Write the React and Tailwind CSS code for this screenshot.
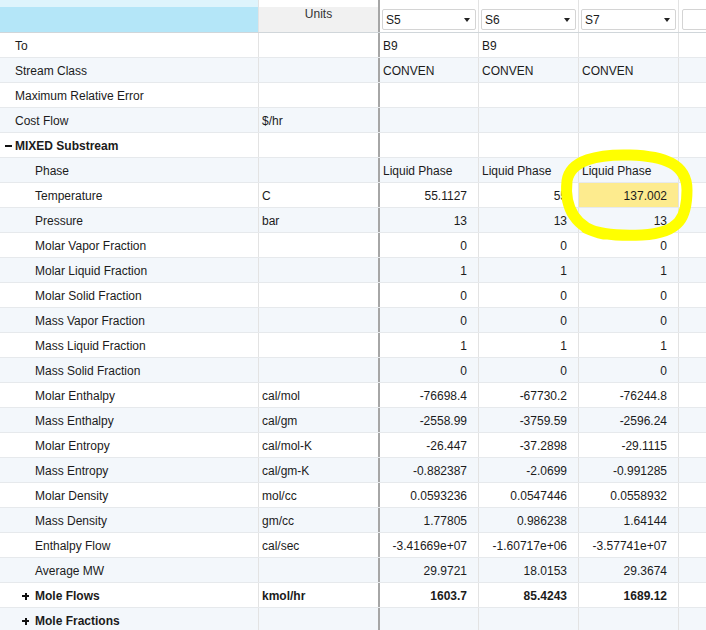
import React from 'react';

const rows = [
  { label: 'To', level: 0, vals: ['B9', 'B9', ''], left: true },
  { label: 'Stream Class', level: 0, vals: ['CONVEN', 'CONVEN', 'CONVEN'], left: true },
  { label: 'Maximum Relative Error', level: 0, vals: ['', '', ''] },
  { label: 'Cost Flow', level: 0, units: '$/hr', vals: ['', '', ''] },
  { label: 'MIXED Substream', level: 0, group: 'minus', bold: true, vals: ['', '', ''] },
  { label: 'Phase', level: 1, vals: ['Liquid Phase', 'Liquid Phase', 'Liquid Phase'], left: true },
  { label: 'Temperature', level: 1, units: 'C', vals: ['55.1127', '55', '137.002'], mark: 2 },
  { label: 'Pressure', level: 1, units: 'bar', vals: ['13', '13', '13'] },
  { label: 'Molar Vapor Fraction', level: 1, vals: ['0', '0', '0'] },
  { label: 'Molar Liquid Fraction', level: 1, vals: ['1', '1', '1'] },
  { label: 'Molar Solid Fraction', level: 1, vals: ['0', '0', '0'] },
  { label: 'Mass Vapor Fraction', level: 1, vals: ['0', '0', '0'] },
  { label: 'Mass Liquid Fraction', level: 1, vals: ['1', '1', '1'] },
  { label: 'Mass Solid Fraction', level: 1, vals: ['0', '0', '0'] },
  { label: 'Molar Enthalpy', level: 1, units: 'cal/mol', vals: ['-76698.4', '-67730.2', '-76244.8'] },
  { label: 'Mass Enthalpy', level: 1, units: 'cal/gm', vals: ['-2558.99', '-3759.59', '-2596.24'] },
  { label: 'Molar Entropy', level: 1, units: 'cal/mol-K', vals: ['-26.447', '-37.2898', '-29.1115'] },
  { label: 'Mass Entropy', level: 1, units: 'cal/gm-K', vals: ['-0.882387', '-2.0699', '-0.991285'] },
  { label: 'Molar Density', level: 1, units: 'mol/cc', vals: ['0.0593236', '0.0547446', '0.0558932'] },
  { label: 'Mass Density', level: 1, units: 'gm/cc', vals: ['1.77805', '0.986238', '1.64144'] },
  { label: 'Enthalpy Flow', level: 1, units: 'cal/sec', vals: ['-3.41669e+07', '-1.60717e+06', '-3.57741e+07'] },
  { label: 'Average MW', level: 1, vals: ['29.9721', '18.0153', '29.3674'] },
  { label: 'Mole Flows', level: 1, group: 'plus', bold: true, units: 'kmol/hr', vals: ['1603.7', '85.4243', '1689.12'] },
  { label: 'Mole Fractions', level: 1, group: 'plus', bold: true, vals: ['', '', ''] },
];

const streams = ['S5', 'S6', 'S7'];
const colW = ['w-[99px]', 'w-[100px]', 'w-[100px]'];

function Combo({ name, wide }) {
  return (
    <div className={`h-[21px] bg-white border border-[#d4d4d4] rounded-[2px] flex items-center justify-between pl-[3px] pr-[5px] pt-[1px] ${wide ? 'w-[94px]' : 'w-full'}`}>
      <span>{name}</span>
      {name && <span className="w-0 h-0 border-l-[3.5px] border-r-[3.5px] border-t-[4px] border-l-transparent border-r-transparent border-t-[#222]" />}
    </div>
  );
}

function Toggle({ plus }) {
  return (
    <span className="relative w-[7px] h-[7px] flex items-center justify-center">
      <span className="absolute w-[7px] h-[2px] bg-[#111]" />
      {plus && <span className="absolute w-[2px] h-[7px] bg-[#111]" />}
    </span>
  );
}

function Row({ row, i }) {
  const bg = i % 2 === 1 ? 'bg-[#f3f7fb]' : 'bg-white';
  const weight = row.bold ? 'font-bold' : '';
  return (
    <div className={`flex h-[25px] border-b border-[#e6e9ec] ${bg} ${weight}`}>
      <div className="w-[258px] flex items-center shrink-0 pt-[2px]">
        {row.group === 'minus' && (
          <span className="w-[15px] pl-[5px] flex">
            <Toggle />
          </span>
        )}
        {row.group === 'plus' && (
          <span className="w-[35px] pl-[22px] flex">
            <Toggle plus />
          </span>
        )}
        {!row.group && <span className={row.level ? 'w-[35px]' : 'w-[15px]'} />}
        <span>{row.label}</span>
      </div>
      <div className="w-[120px] shrink-0 border-l border-[#e3e3e3] flex items-center pl-[3px] pt-[2px]">{row.units}</div>
      <div className="w-[2px] shrink-0 bg-[#a6a6a6]" />
      {row.vals.map((v, k) => (
        <div
          key={k}
          className={`${colW[k]} shrink-0 border-r border-[#e3e3e3] flex items-center pt-[2px] ${
            row.left ? 'justify-start pl-[3px]' : 'justify-end pr-[11px]'
          } ${row.mark === k ? 'bg-[#fdeb8e]' : ''}`}
        >
          {v}
        </div>
      ))}
      <div className="flex-1" />
    </div>
  );
}

export default function App() {
  return (
    <div className="relative w-[706px] h-[630px] overflow-hidden bg-white text-[12px] text-[#1b1b1b] font-['Liberation_Sans',Arial,sans-serif] leading-none">
      {/* header */}
      <div className="flex h-[33px] border-b border-[#d0d6da]">
        <div className="w-[258px] shrink-0 flex flex-col">
          <div className="h-[7px] bg-[#def4fc]" />
          <div className="flex-1 bg-[#b4e6f8]" />
        </div>
        <div className="w-[120px] shrink-0 border-l border-[#e3e3e3] flex flex-col">
          <div className="h-[7px] bg-white" />
          <div className="flex-1 bg-[#f1f1f1] flex justify-center pt-[1px] text-[#333]">Units</div>
        </div>
        <div className="w-[2px] shrink-0 bg-[#a6a6a6]" />
        {streams.map((s, k) => (
          <div key={s} className={`${colW[k]} shrink-0 border-r border-[#e3e3e3] pt-[9px] pl-[2px] pr-[2px]`}>
            <Combo name={s} />
          </div>
        ))}
        <div className="flex-1 pt-[9px] pl-[3px]">
          <Combo name="" wide />
        </div>
      </div>
      {rows.map((r, i) => (
        <Row key={r.label} row={r} i={i} />
      ))}
      {/* marker highlight */}
      <svg className="absolute left-0 top-0 pointer-events-none" width="706" height="630">
        <path
          d="M 604 234 C 576 229 564 208 567 181 C 570 160 598 154 630 155 C 664 156 687 164 687 190 C 687 216 681 233 642 235 C 620 236 600 235 586 228"
          fill="none"
          stroke="#ffff00"
          strokeWidth="11"
          strokeLinecap="round"
        />
      </svg>
    </div>
  );
}
